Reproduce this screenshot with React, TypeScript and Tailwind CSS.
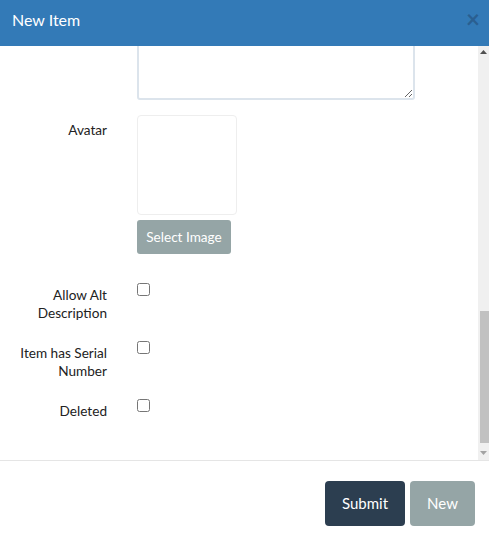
import React from "react";

const labelCls = "w-[107px] shrink-0 text-right text-[13.6px] leading-[18px] text-[#222]";

const CheckRow = ({ label, className }: { label: React.ReactNode; className?: string }) => (
  <div className={`flex ${className ?? ""}`}>
    <label className={`${labelCls} pt-[3px]`}>{label}</label>
    <div className="ml-[30px]">
      <input type="checkbox" className="m-0 block h-[13px] w-[13px]" />
    </div>
  </div>
);

const App = () => {
  return (
    <div
      className="flex h-[540px] w-[489px] flex-col bg-white"
      style={{ fontFamily: "Lato, 'Open Sans', sans-serif" }}
    >
      {/* header */}
      <div className="flex h-[46px] shrink-0 items-start justify-between bg-[#337ab7] pl-[12px] pr-[9px] pt-[8px]">
        <h4 className="text-[16px] leading-[24px] text-white">New Item</h4>
        <button className="mt-[-1px] text-[24px] font-bold leading-[24px] text-[#2a5f91]">×</button>
      </div>

      {/* body */}
      <div className="flex h-[414px] shrink-0">
        <div className="flex-1 overflow-hidden">
          <div className="flex">
            <div className="w-[107px] shrink-0" />
            <textarea className="ml-[30px] mt-[-61px] block h-[115px] w-[278px] rounded-[3px] border-2 border-[#dce4ec] bg-white" />
          </div>

          <div className="mt-[15px] flex">
            <label className={`${labelCls} pt-[6px]`}>Avatar</label>
            <div className="ml-[30px]">
              <div className="h-[100px] w-[100px] rounded-[4px] border border-[#eee]" />
              <button className="mt-[5px] h-[34px] w-[94px] rounded-[3px] bg-[#95a5a6] text-[13.6px] text-white">
                Select Image
              </button>
            </div>
          </div>

          <CheckRow
            className="mt-[29px]"
            label={
              <>
                Allow Alt
                <br />
                Description
              </>
            }
          />
          <CheckRow
            className="mt-[19px]"
            label={
              <>
                Item has Serial
                <br />
                Number
              </>
            }
          />
          <CheckRow className="mt-[19px]" label="Deleted" />
        </div>

        {/* scrollbar */}
        <div className="flex w-[11px] shrink-0 flex-col bg-[#f0f0f0]">
          <div className="flex h-[12px] items-center justify-center">
            <svg width="7" height="4" viewBox="0 0 7 4">
              <path d="M0 4 L3.5 0 L7 4 Z" fill="#505050" />
            </svg>
          </div>
          <div className="flex flex-1 flex-col pl-[2px]">
            <div className="h-[253px]" />
            <div className="h-[132px] bg-[#c1c1c1]" />
          </div>
          <div className="flex h-[14px] items-center justify-center">
            <svg width="7" height="4" viewBox="0 0 7 4">
              <path d="M0 0 L3.5 4 L7 0 Z" fill="#a3a3a3" />
            </svg>
          </div>
        </div>
      </div>

      {/* footer */}
      <div className="flex flex-1 items-start justify-end gap-[5px] border-t border-[#e5e5e5] pr-[14px] pt-[20px]">
        <button className="h-[45px] w-[80px] rounded-[4px] bg-[#2c3e50] text-[15px] text-white">
          Submit
        </button>
        <button className="h-[45px] w-[65px] rounded-[4px] bg-[#95a5a6] text-[15px] text-white">
          New
        </button>
      </div>
    </div>
  );
};

export default App;
